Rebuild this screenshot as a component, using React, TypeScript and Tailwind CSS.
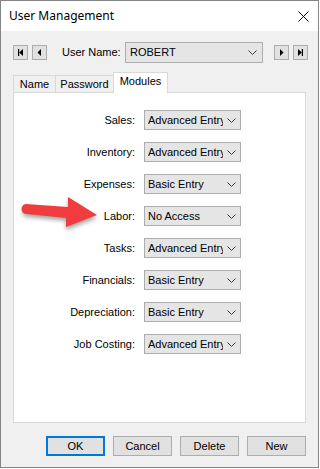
const modules = [
  { label: 'Sales', value: 'Advanced Entry' },
  { label: 'Inventory', value: 'Advanced Entry' },
  { label: 'Expenses', value: 'Basic Entry' },
  { label: 'Labor', value: 'No Access' },
  { label: 'Tasks', value: 'Advanced Entry' },
  { label: 'Financials', value: 'Basic Entry' },
  { label: 'Depreciation', value: 'Basic Entry' },
  { label: 'Job Costing', value: 'Advanced Entry' },
];

const tabs = [
  { name: 'Name', width: 'w-[43px]' },
  { name: 'Password', width: 'w-[59px]' },
  { name: 'Modules', width: 'w-[55px]' },
];

const Chevron = () => (
  <svg width="9" height="5" viewBox="0 0 9 5" className="shrink-0">
    <polyline points="0.5,0.5 4.5,4.5 8.5,0.5" fill="none" stroke="#3c3c3c" strokeWidth="1" />
  </svg>
);

const NavButton = ({ kind }: { kind: 'first' | 'prev' | 'next' | 'last' }) => (
  <button className="w-[15px] h-[15px] shrink-0 border border-[#adadad] bg-[#e1e1e1] flex items-center justify-center">
    <svg width="7" height="7" viewBox="0 0 7 7">
      {kind === 'first' && (
        <>
          <rect x="1" y="0" width="1.2" height="7" fill="#000" />
          <polygon points="6,0 6,7 2.2,3.5" fill="#000" />
        </>
      )}
      {kind === 'prev' && <polygon points="5,0 5,7 1.5,3.5" fill="#000" />}
      {kind === 'next' && <polygon points="2,0 2,7 5.5,3.5" fill="#000" />}
      {kind === 'last' && (
        <>
          <polygon points="1,0 1,7 4.8,3.5" fill="#000" />
          <rect x="4.8" y="0" width="1.2" height="7" fill="#000" />
        </>
      )}
    </svg>
  </button>
);

const RedArrow = () => (
  <svg
    width="90"
    height="45"
    viewBox="0 0 90 45"
    className="absolute left-[4px] top-[98px] pointer-events-none"
  >
    <defs>
      <filter id="arrowShadow" x="-20%" y="-20%" width="140%" height="160%">
        <feGaussianBlur stdDeviation="2" />
      </filter>
    </defs>
    <path
      d="M9,16 L50,19 L50,9 L79,27 L48,39 L48,30 L10,26 A5,5 0 0 1 9,16 Z"
      fill="#000"
      opacity="0.35"
      filter="url(#arrowShadow)"
    />
    <path
      d="M8,13 L50,16 L50,6 L79,24 L48,36 L48,27 L9,23 A5,5 0 0 1 8,13 Z"
      fill="#f03c3f"
    />
  </svg>
);

const App = () => {
  return (
    <div className="w-[320px] h-[469px] bg-white" style={{ fontFamily: '"Liberation Sans", Arial, sans-serif' }}>
      <div className="w-[319px] h-[468px] border border-[#858585] flex flex-col">
        {/* title bar */}
        <div className="h-[30px] bg-white flex items-center justify-between pl-[8px] pr-[9px] shrink-0">
          <span className="text-[12px] text-black" style={{ fontFamily: '"Noto Sans", "Open Sans", sans-serif' }}>
            User Management
          </span>
          <svg width="11" height="11" viewBox="0 0 11 11">
            <line x1="0.5" y1="0.5" x2="10.5" y2="10.5" stroke="#000" strokeWidth="1" />
            <line x1="10.5" y1="0.5" x2="0.5" y2="10.5" stroke="#000" strokeWidth="1" />
          </svg>
        </div>

        <div className="flex-1 bg-[#f0f0f0] flex flex-col px-[12px] pt-[11px]">
          {/* user navigation row */}
          <div className="flex items-center h-[21px]">
            <NavButton kind="first" />
            <div className="ml-[4px] shrink-0">
              <NavButton kind="prev" />
            </div>
            <span className="ml-[15px] w-[54px] shrink-0 whitespace-nowrap text-[11px] text-black">User Name:</span>
            <div className="ml-[9px] w-[138px] shrink-0 h-[21px] border border-[#adadad] bg-[#e5e5e5] flex items-center pl-[4px] pr-[5px]">
              <span className="flex-1 text-[11px] text-black">ROBERT</span>
              <Chevron />
            </div>
            <div className="ml-[11px] shrink-0">
              <NavButton kind="next" />
            </div>
            <div className="ml-[4px] shrink-0">
              <NavButton kind="last" />
            </div>
          </div>

          {/* tabs */}
          <div className="mt-[9px] h-[20px] flex items-end">
            {tabs.map((tab, i) => {
              const active = tab.name === 'Modules';
              return (
                <div
                  key={tab.name}
                  className={`${tab.width} ${i > 0 ? '-ml-px' : ''} ${
                    active ? 'h-[21px] bg-white z-10 -mb-px pt-[3px]' : 'h-[17px] bg-[#f0f0f0] pt-[3px]'
                  } border border-b-0 border-[#d9d9d9] text-[11px] text-black text-center leading-none`}
                >
                  {tab.name}
                </div>
              );
            })}
          </div>

          {/* tab panel */}
          <div className="relative h-[331px] bg-white border border-[#d9d9d9] pt-[17px] flex flex-col gap-[12px]">
            {modules.map((m) => (
              <div key={m.label} className="flex items-center h-[20px]">
                <span className="w-[121px] text-right text-[11px] text-black">{m.label}:</span>
                <div className="ml-[9px] w-[97px] h-[20px] border border-[#adadad] bg-[#e5e5e5] flex items-center pl-[3px] pr-[4px]">
                  <span className="flex-1 overflow-hidden whitespace-nowrap text-[11px] text-black">{m.value}</span>
                  <div className="w-[13px] flex justify-end">
                    <Chevron />
                  </div>
                </div>
              </div>
            ))}
            <RedArrow />
          </div>

          {/* dialog buttons */}
          <div className="mt-[13px] flex justify-end gap-[8px]">
            {['OK', 'Cancel', 'Delete', 'New'].map((label) => (
              <button
                key={label}
                className={`w-[59px] h-[20px] bg-[#e1e1e1] text-[11px] text-black flex items-center justify-center ${
                  label === 'OK' ? 'border-2 border-[#0078d7]' : 'border border-[#adadad]'
                }`}
              >
                {label}
              </button>
            ))}
          </div>
        </div>
      </div>
    </div>
  );
};

export default App;
